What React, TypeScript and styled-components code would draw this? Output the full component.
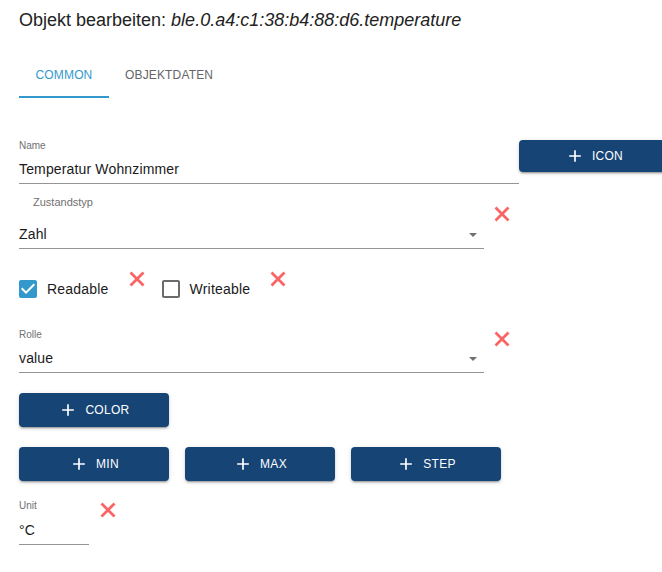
import React from "react";
import styled, { createGlobalStyle } from "styled-components";

const GlobalStyle = createGlobalStyle`
  html, body {
    margin: 0;
    padding: 0;
    background: #ffffff;
    overflow: hidden;
  }
  body {
    font-family: "Liberation Sans", Arial, sans-serif;
    color: #1f1f1f;
  }
`;

const Page = styled.div`
  width: 700px;
  padding: 10px 0 0 19px;
  box-sizing: border-box;
  display: flex;
  flex-direction: column;
`;

const Title = styled.div`
  font-size: 18px;
  line-height: 21px;
  height: 21px;
  color: #222;
  white-space: nowrap;
  em {
    font-style: italic;
  }
`;

const TabBar = styled.div`
  margin-top: 19px;
  display: flex;
  height: 48px;
`;

const Tab = styled.div<{ $active?: boolean }>`
  box-sizing: border-box;
  min-width: 90px;
  padding: 4px 16px 0;
  height: 48px;
  display: flex;
  align-items: center;
  justify-content: center;
  font-size: 12px;
  letter-spacing: 0.15px;
  text-transform: uppercase;
  color: ${(p) => (p.$active ? "#3399cc" : "#666")};
  border-bottom: 2px solid ${(p) => (p.$active ? "#3399cc" : "transparent")};
`;

const Row = styled.div<{ $mt: number }>`
  display: flex;
  align-items: flex-start;
  margin-top: ${(p) => p.$mt}px;
`;

const Field = styled.div<{ $w: number }>`
  width: ${(p) => p.$w}px;
  display: flex;
  flex-direction: column;
`;

const Label = styled.div<{ $size?: number; $indent?: number; $pt?: number }>`
  font-size: ${(p) => p.$size ?? 10}px;
  line-height: ${(p) => (p.$size ?? 10) + 2}px;
  color: #707070;
  padding-left: ${(p) => p.$indent ?? 0}px;
  padding-top: ${(p) => p.$pt ?? 0}px;
`;

const Input = styled.div<{ $gap: number; $pb: number }>`
  margin-top: ${(p) => p.$gap}px;
  font-size: 14px;
  line-height: 20px;
  letter-spacing: 0.15px;
  color: #1a1a1a;
  padding-bottom: ${(p) => p.$pb}px;
  border-bottom: 1px solid #949494;
  display: flex;
  align-items: center;
  justify-content: space-between;
`;

const Arrow = styled.svg`
  width: 8px;
  height: 4px;
  margin-right: 7px;
  margin-top: 2px;
`;

const Button = styled.button<{ $h?: number }>`
  box-sizing: border-box;
  width: 150px;
  height: ${(p) => p.$h ?? 34}px;
  flex-shrink: 0;
  border: none;
  border-radius: 4px;
  background: #164475;
  color: #ffffff;
  font-family: "Liberation Sans", Arial, sans-serif;
  font-size: 12px;
  letter-spacing: 0.3px;
  text-transform: uppercase;
  display: flex;
  align-items: center;
  justify-content: center;
  gap: 7px;
  padding: 0;
  box-shadow: 0 3px 1px -2px rgba(0, 0, 0, 0.2), 0 2px 2px 0 rgba(0, 0, 0, 0.14),
    0 1px 5px 0 rgba(0, 0, 0, 0.12);
  svg {
    width: 20px;
    height: 20px;
  }
`;

const ButtonRow = styled.div<{ $mt: number }>`
  display: flex;
  gap: 16px;
  margin-top: ${(p) => p.$mt}px;
`;

const XIcon = styled.svg<{ $ml: number; $mt: number }>`
  width: 16px;
  height: 16px;
  flex-shrink: 0;
  margin-left: ${(p) => p.$ml}px;
  margin-top: ${(p) => p.$mt}px;
`;

const CheckGroup = styled.label<{ $ml?: number }>`
  display: flex;
  align-items: center;
  height: 20px;
  margin-top: 9px;
  margin-left: ${(p) => p.$ml ?? 0}px;
  font-size: 14px;
  line-height: 20px;
  letter-spacing: 0.2px;
  color: #1a1a1a;
  svg {
    width: 24px;
    height: 24px;
    margin-left: -3px;
    flex-shrink: 0;
  }
  span {
    margin-left: 7px;
  }
`;

const Plus = () => (
  <svg viewBox="0 0 24 24" fill="currentColor">
    <path d="M19 13h-6v6h-2v-6H5v-2h6V5h2v6h6v2z" />
  </svg>
);

const Close = ({ ml, mt }: { ml: number; mt: number }) => (
  <XIcon $ml={ml} $mt={mt} viewBox="0 0 16 16">
    <path d="M1.5 1.5 L14.5 14.5 M14.5 1.5 L1.5 14.5" stroke="#fb6464" strokeWidth="2.8" />
  </XIcon>
);

const DropArrow = () => (
  <Arrow viewBox="0 0 8 4">
    <path d="M0 0 L8 0 L4 4 Z" fill="#6f6f6f" />
  </Arrow>
);

const Checked = () => (
  <svg viewBox="0 0 24 24">
    <path
      fill="#3399cc"
      d="M19 3H5c-1.11 0-2 .9-2 2v14c0 1.1.89 2 2 2h14c1.11 0 2-.9 2-2V5c0-1.1-.89-2-2-2zm-9 14l-5-5 1.41-1.41L10 14.17l7.59-7.59L19 8l-9 9z"
    />
  </svg>
);

const Unchecked = () => (
  <svg viewBox="0 0 24 24">
    <path
      fill="#6b6b6b"
      d="M19 5v14H5V5h14m0-2H5c-1.1 0-2 .9-2 2v14c0 1.1.9 2 2 2h14c1.1 0 2-.9 2-2V5c0-1.1-.9-2-2-2z"
    />
  </svg>
);

export default function App() {
  return (
    <>
      <GlobalStyle />
      <Page>
        <Title>
          Objekt bearbeiten: <em>ble.0.a4:c1:38:b4:88:d6.temperature</em>
        </Title>
        <TabBar>
          <Tab $active>Common</Tab>
          <Tab>Objektdaten</Tab>
        </TabBar>

        <Row $mt={42}>
          <Field $w={500}>
            <Label $pt={0}>Name</Label>
            <Input $gap={7} $pb={4}>Temperatur Wohnzimmer</Input>
          </Field>
          <Button $h={32}>
            <Plus />
            Icon
          </Button>
        </Row>

        <Row $mt={12}>
          <Field $w={465}>
            <Label $size={11} $indent={14}>Zustandstyp</Label>
            <Input $gap={15} $pb={4}>
              Zahl
              <DropArrow />
            </Input>
          </Field>
          <Close ml={10} mt={10} />
        </Row>

        <Row $mt={21}>
          <CheckGroup>
            <Checked />
            <span>Readable</span>
          </CheckGroup>
          <Close ml={20} mt={1} />
          <CheckGroup $ml={17}>
            <Unchecked />
            <span>Writeable</span>
          </CheckGroup>
          <Close ml={20} mt={1} />
        </Row>

        <Row $mt={30}>
          <Field $w={465}>
            <Label>Rolle</Label>
            <Input $gap={7} $pb={4}>
              value
              <DropArrow />
            </Input>
          </Field>
          <Close ml={10} mt={2} />
        </Row>

        <ButtonRow $mt={20}>
          <Button>
            <Plus />
            Color
          </Button>
        </ButtonRow>

        <ButtonRow $mt={20}>
          <Button>
            <Plus />
            Min
          </Button>
          <Button>
            <Plus />
            Max
          </Button>
          <Button>
            <Plus />
            Step
          </Button>
        </ButtonRow>

        <Row $mt={19}>
          <Field $w={70}>
            <Label>Unit</Label>
            <Input $gap={8} $pb={4}>°C</Input>
          </Field>
          <Close ml={11} mt={2} />
        </Row>
      </Page>
    </>
  );
}
